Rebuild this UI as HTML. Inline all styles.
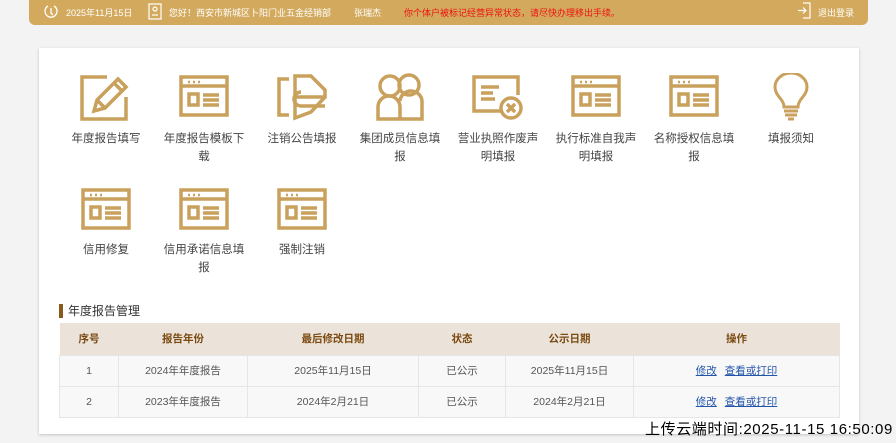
<!DOCTYPE html>
<html><head><meta charset="utf-8"><style>
*{margin:0;padding:0;box-sizing:border-box}
body{width:896px;height:443px;background:#f3f3f3;font-family:"Liberation Sans","Noto Sans CJK SC",sans-serif;position:relative;overflow:hidden}
.top{position:absolute;left:29px;top:0;width:839px;height:25px;background:#d3aa5d;border-radius:0 0 6px 6px;color:#fff;font-size:9px}
.top span{position:absolute;top:6px;white-space:nowrap}
.card{position:absolute;left:39px;top:48px;width:820px;height:386px;background:#fff;box-shadow:0 1px 3px rgba(0,0,0,.2)}
.tile{position:absolute;width:98px;text-align:center;font-size:11.5px;color:#444;line-height:18px}
.tile svg{display:block;margin:0 auto 9px}
.sec{position:absolute;left:59px;top:304px;font-size:12px;color:#333;border-left:4px solid #8a5a1c;padding-left:5px;line-height:14px}
table{position:absolute;left:59px;top:323px;width:781px;border-collapse:collapse;font-size:10.5px;color:#555;text-align:center}
th{background:#ebe3da;color:#7a4a10;height:32px;font-weight:bold}
td{background:#f8f8f8;height:31px;border:1px solid #e6e6e6}
a{color:#2255aa;text-decoration:underline;margin:0 4px}
.up{position:absolute;left:645px;top:418px;font-size:15px;letter-spacing:0.6px;color:#000;white-space:nowrap}
</style></head><body>
<div class="top">
<svg style="position:absolute;left:15px;top:4px" width="14" height="16" viewBox="0 0 14 16" fill="none" stroke="#fff" stroke-width="1.3"><path d="M4 2A6 6 0 1 0 10 2"/><path d="M7 4v5l2 2"/></svg>
<span style="left:37px">2025年11月15日</span>
<svg style="position:absolute;left:119px;top:3px" width="14" height="17" viewBox="0 0 14 17" fill="none" stroke="#fff" stroke-width="1.2"><rect x="1" y="1" width="12" height="15"/><circle cx="7" cy="6" r="2"/><path d="M4 12h6"/></svg>
<span style="left:140px">您好！西安市新城区卜阳门业五金经销部</span>
<span style="left:325px">张瑞杰</span>
<span style="left:375px;color:#e11">你个体户被标记经营异常状态，请尽快办理移出手续。</span>
<svg style="position:absolute;left:768px;top:2px" width="14" height="17" viewBox="0 0 14 17" fill="none" stroke="#fff" stroke-width="1.2"><path d="M6 1h7v15H6M1 8.5h8M6 5.5l3 3-3 3"/></svg>
<span style="left:789px">退出登录</span>
</div>
<div class="card"></div>

<svg width="0" height="0" style="position:absolute"><defs>
<g id="win" fill="none" stroke="#c9a05c" stroke-width="3.5"><rect x="2" y="2" width="46" height="38"/><path d="M2 11h46"/><path d="M9 7h2M14 7h2M19 7h2" stroke-width="2.5"/><rect x="10" y="19" width="9" height="11"/><path d="M24 20h16M24 25h16M24 30h16"/></g>
</defs></svg>

<div class="tile" style="left:57px;top:73px"><svg width="54" height="48" viewBox="0 0 54 48" fill="none" stroke="#c9a05c" stroke-width="3.5"><path d="M28 4H3v42h44V24"/><path d="M15 38l3-11L39 6l8 8-21 21z M18 27l8 8 M35 10l8 8"/></svg>年度报告填写</div>
<div class="tile" style="left:155px;top:73px"><svg width="50" height="48" viewBox="0 0 50 44"><use href="#win"/></svg>年度报告模板下<br>载</div>
<div class="tile" style="left:253px;top:73px"><svg width="54" height="48" viewBox="0 0 54 48" fill="none" stroke="#c9a05c" stroke-width="3.5"><path d="M14 6H4v36h10"/><path d="M20 3h16l14 14v7H20zM20 24v21l16-6 14-15"/><path d="M26 19a7 7 0 0 0 0 14h24"/></svg>注销公告填报</div>
<div class="tile" style="left:351px;top:73px"><svg width="50" height="48" viewBox="0 0 50 48" fill="none" stroke="#c9a05c" stroke-width="3.5"><circle cx="15" cy="13" r="10"/><circle cx="34" cy="12" r="10"/><path d="M3 46V34a10 10 0 0 1 22 0v12zM25 28a10 10 0 0 1 22 2v16H25"/></svg>集团成员信息填<br>报</div>
<div class="tile" style="left:449px;top:73px"><svg width="54" height="48" viewBox="0 0 54 48" fill="none" stroke="#c9a05c" stroke-width="3.5"><path d="M30 38H3V4h44v18"/><path d="M10 14h18M10 20h12M10 26h14"/><circle cx="40" cy="35" r="10"/><path d="M36 31l8 8M44 31l-8 8"/></svg>营业执照作废声<br>明填报</div>
<div class="tile" style="left:547px;top:73px"><svg width="50" height="48" viewBox="0 0 50 44"><use href="#win"/></svg>执行标准自我声<br>明填报</div>
<div class="tile" style="left:645px;top:73px"><svg width="50" height="48" viewBox="0 0 50 44"><use href="#win"/></svg>名称授权信息填<br>报</div>
<div class="tile" style="left:742px;top:73px"><svg width="40" height="48" viewBox="0 0 40 48" fill="none" stroke="#c9a05c" stroke-width="3"><path d="M13 34c0-8-9-11-9-20a16 14 0 0 1 32 0c0 9-9 12-9 20z"/><path d="M13 38h14M14 42h12M17 46h6"/></svg>填报须知</div>

<div class="tile" style="left:57px;top:188px"><svg width="50" height="44" viewBox="0 0 50 44"><use href="#win"/></svg>信用修复</div>
<div class="tile" style="left:155px;top:188px"><svg width="50" height="44" viewBox="0 0 50 44"><use href="#win"/></svg>信用承诺信息填<br>报</div>
<div class="tile" style="left:253px;top:188px"><svg width="50" height="44" viewBox="0 0 50 44"><use href="#win"/></svg>强制注销</div>

<div class="sec">年度报告管理</div>
<table>
<tr><th style="width:59px">序号</th><th style="width:129px">报告年份</th><th style="width:171px">最后修改日期</th><th style="width:87px">状态</th><th style="width:128px">公示日期</th><th>操作</th></tr>
<tr><td>1</td><td>2024年年度报告</td><td>2025年11月15日</td><td>已公示</td><td>2025年11月15日</td><td><a>修改</a><a>查看或打印</a></td></tr>
<tr><td>2</td><td>2023年年度报告</td><td>2024年2月21日</td><td>已公示</td><td>2024年2月21日</td><td><a>修改</a><a>查看或打印</a></td></tr>
</table>
<div class="up">上传云端时间:2025-11-15 16:50:09</div>
</body></html>
